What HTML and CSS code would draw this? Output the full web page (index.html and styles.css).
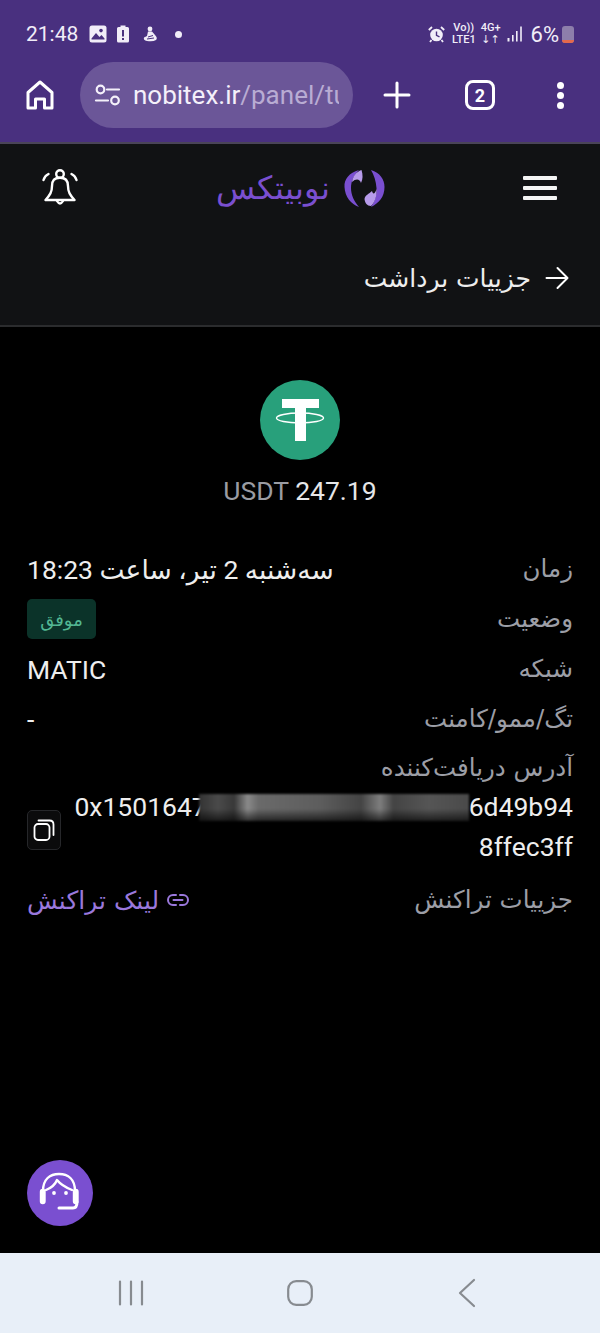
FILE: index.html
```html
<!DOCTYPE html>
<html lang="fa">

<head>
    <meta charset="UTF-8">
    <meta name="viewport" content="width=device-width, initial-scale=1.0">
    <title>Nobitex</title>
    <link rel="stylesheet" href="styles.css">
</head>

<body>
    <div class="phone">
        <!-- Android status bar + browser toolbar -->
        <div class="browser-top">
            <div class="status-bar">
                <div class="status-left">
                    <span class="clock">21:48</span>
                    <svg class="icon-pic" width="18" height="18" viewBox="0 0 18 18">
                        <rect x="0.5" y="0.5" width="17" height="17" rx="2.5" fill="#f1edf8" />
                        <circle cx="12" cy="5.6" r="1.8" fill="#49307f" />
                        <path d="M2.5 13.5 L7 8 L10.5 12 L12.5 10 L15.5 13.5 V14.5 H2.5 Z" fill="#49307f" />
                    </svg>
                    <svg class="icon-batt" width="14" height="18" viewBox="0 0 14 18">
                        <path d="M4.5 0.5 H9.5 V2 H11.5 Q13 2 13 3.5 V16 Q13 17.5 11.5 17.5 H2.5 Q1 17.5 1 16 V3.5 Q1 2 2.5 2 H4.5 Z" fill="#f1edf8" />
                        <rect x="6" y="5" width="2" height="6.5" fill="#49307f" />
                        <rect x="6" y="13" width="2" height="2" fill="#49307f" />
                    </svg>
                    <svg class="icon-app" width="15" height="16" viewBox="0 0 15 16">
                        <circle cx="7" cy="3" r="2.4" fill="#f1edf8" />
                        <path d="M5 5.5 L9 5.5 L12 9 Q15 12 13 14 Q10 16 4 15 Q0 14 1 11.5 L4 10 Z" fill="#f1edf8" />
                        <path d="M5 11 L10 9.5 M4 13 L11 12" stroke="#49307f" stroke-width="1" />
                    </svg>
                    <span class="st-dot"></span>
                </div>
                <div class="status-right">
                    <svg class="icon-alarm" width="17" height="17" viewBox="0 0 17 17">
                        <circle cx="8.5" cy="9" r="6.3" fill="#f1edf8" />
                        <path d="M8.5 5.5 V9.3 L11.5 10.8" stroke="#49307f" stroke-width="1.4" fill="none" />
                        <path d="M0.8 4 L4 1 M16.2 4 L13 1 M3.5 14 L2 16 M13.5 14 L15 16" stroke="#f1edf8" stroke-width="1.8" />
                    </svg>
                    <span class="net-text net-volte">Vo))<br>LTE1</span>
                    <span class="net-text net-4g">4G+<br>↓↑</span>
                    <svg class="icon-signal" width="16" height="16" viewBox="0 0 16 16">
                        <rect x="0.5" y="12" width="2" height="3.5" fill="#f1edf8" />
                        <rect x="5" y="9" width="1.6" height="6.5" fill="#f1edf8" />
                        <rect x="9" y="5" width="1.6" height="10.5" fill="#f1edf8" />
                        <rect x="13.2" y="0.5" width="1.6" height="15" fill="#f1edf8" />
                    </svg>
                    <span class="batt-text">6%</span>
                    <span class="batt-icon"><span class="batt-level"></span></span>
                </div>
            </div>
            <div class="toolbar">
                <button class="tool-btn tool-home">
                    <svg width="28" height="30" viewBox="0 0 28 30" fill="none" stroke="#fff" stroke-width="3" stroke-linejoin="round">
                        <path d="M2 12.5 L14 2 L26 12.5 V28 H18.5 V19 H9.5 V28 H2 Z" />
                    </svg>
                </button>
                <div class="url-pill">
                    <svg width="28" height="24" viewBox="0 0 28 24" fill="none" stroke="#f4f0fa" stroke-width="2.2" stroke-linecap="round">
                        <circle cx="6.5" cy="6.5" r="3.8" />
                        <path d="M13 6.5 H25" />
                        <path d="M2 17.5 H14" />
                        <circle cx="21" cy="17.5" r="3.8" />
                    </svg>
                    <div class="url-text"><span class="url-host">nobitex.ir</span><span class="url-path">/panel/tu</span></div>
                </div>
                <button class="tool-btn tool-plus">
                    <svg width="28" height="28" viewBox="0 0 28 28" stroke="#fff" stroke-width="3" stroke-linecap="round">
                        <path d="M14 2 V26 M2 14 H26" />
                    </svg>
                </button>
                <div class="tabs-count">2</div>
                <button class="tool-btn tool-more">
                    <span class="more-dot"></span>
                    <span class="more-dot"></span>
                    <span class="more-dot"></span>
                </button>
            </div>
        </div>

        <!-- site header -->
        <header class="site-header">
            <div class="nav-row">
                <svg class="icon-bell" width="36" height="38" viewBox="0 0 36 38" fill="none" stroke="#fff" stroke-width="2.4" stroke-linecap="round" stroke-linejoin="round">
                    <path d="M1.5 11 Q2.5 7 6.5 5" />
                    <path d="M29.5 5 Q33.5 7 34.5 11" />
                    <circle cx="18" cy="5" r="3.8" />
                    <path d="M18 8.8 C12 8.8 10 12 10 17 C10 23 8 26 3.5 31 H32.5 C28 26 26 23 26 17 C26 12 24 8.8 18 8.8 Z" />
                    <path d="M15 32 Q18 37 21 32" />
                </svg>
                <div class="logo">
                    <span class="logo-text">نوبیتکس</span>
                    <svg width="42" height="40" viewBox="0 0 42 40">
                        <path d="M15 2 C5 5 0 11 0.5 19 C1 29 7 36 15 39 C10 33 7 27 7 20 C7 13 10 7 15 2 Z" fill="#7a4fd0" />
                        <path d="M27 2 C36 5 40.5 11 40.5 19 C40.5 29 35 35 27 39 C31 33 33 27 32.5 20 C32 13 30 7 27 2 Z" fill="#7a4fd0" />
                        <path d="M8 14 C9 8 12 4 17.5 2 C19 7 19 11 17 15 C16 11 12 10 8 14 Z" fill="#b79bea" />
                        <path d="M28 23 C25 26 21 27 20.5 31 C21 35 23 38 27 38 C31 34 33 28 32.5 21 C31 26 29 27 28 23 Z" fill="#b79bea" />
                    </svg>
                </div>
                <div class="burger">
                    <span></span>
                    <span></span>
                    <span></span>
                </div>
            </div>
            <div class="title-row">
                <svg width="24" height="24" viewBox="0 0 24 24" fill="none" stroke="#fff" stroke-width="2" stroke-linecap="round" stroke-linejoin="round">
                    <path d="M1.5 12 H22 M12.5 2 L22.5 12 L12.5 22" />
                </svg>
                <h1 class="page-title">جزییات برداشت</h1>
            </div>
        </header>

        <!-- withdraw details -->
        <main class="content">
            <div class="coin">
                <svg width="80" height="80" viewBox="0 0 80 80">
                    <circle cx="40" cy="40" r="40" fill="#28a07b" />
                    <path d="M22 19 H59 V28 H46 V61 H35 V28 H22 Z" fill="#fff" />
                    <ellipse cx="40" cy="38" rx="23.5" ry="5" fill="none" stroke="#fff" stroke-width="1.4" />
                </svg>
                <div class="coin-amount"><span class="coin-unit">USDT</span> 247.19</div>
            </div>

            <div class="details" dir="rtl">
                <div class="row">
                    <span class="label">زمان</span>
                    <span class="value">سه‌شنبه 2 تیر، ساعت 18:23</span>
                </div>
                <div class="row">
                    <span class="label">وضعیت</span>
                    <span class="badge">موفق</span>
                </div>
                <div class="row">
                    <span class="label">شبکه</span>
                    <span class="value">MATIC</span>
                </div>
                <div class="row">
                    <span class="label">تگ/ممو/کامنت</span>
                    <span class="value">-</span>
                </div>
                <div class="address-block">
                    <span class="label">آدرس دریافت‌کننده</span>
                    <div class="address-row">
                        <div class="address" dir="ltr">
                            <div class="address-line"><span>0x1501647</span><span class="redacted"></span><span>6d49b94</span></div>
                            <div class="address-line">8ffec3ff</div>
                        </div>
                        <button class="copy-btn">
                            <svg width="22" height="24" viewBox="0 0 22 24" fill="none" stroke="#fff" stroke-width="1.8" stroke-linejoin="round">
                                <rect x="1.5" y="6" width="15" height="16" rx="3.5" />
                                <path d="M5.5 2.5 H16.5 Q20.5 2.5 20.5 6.5 V17" stroke-linecap="round" />
                            </svg>
                        </button>
                    </div>
                </div>
                <div class="row row-link">
                    <span class="label">جزییات تراکنش</span>
                    <a class="tx-link">
                        <svg width="24" height="14" viewBox="0 0 24 14" fill="none" stroke="#9a78dc" stroke-width="2" stroke-linecap="round">
                            <path d="M10 2 H7 A5 5 0 0 0 7 12 H10 M14 2 H17 A5 5 0 0 1 17 12 H14 M7.5 7 H16.5" />
                        </svg>
                        <span>لینک تراکنش</span>
                    </a>
                </div>
            </div>

            <button class="support-btn">
                <svg width="44" height="44" viewBox="0 0 44 44" fill="none" stroke="#fff" stroke-width="2.4" stroke-linecap="round" stroke-linejoin="round">
                    <path d="M5 20 C5 8 12 3 21 3 C30 3 37 8 37 20" />
                    <rect x="3" y="19" width="3.5" height="13" rx="1.7" fill="#fff" />
                    <rect x="36" y="19" width="3.5" height="13" rx="1.7" fill="#fff" />
                    <path d="M8 19 C13 17 17 14 19 9 C23 14 29 17 34 19" />
                    <path d="M39 31 C39 35 38 37 35 37 H21" stroke-width="3" />
                    <circle cx="16" cy="22" r="1.9" fill="#fff" stroke="none" />
                    <circle cx="28" cy="22" r="1.9" fill="#fff" stroke="none" />
                </svg>
            </button>
        </main>

        <!-- Android nav bar -->
        <nav class="android-nav">
            <svg width="26" height="26" viewBox="0 0 26 26" stroke="#878b90" stroke-width="2.2" stroke-linecap="round">
                <path d="M2 1.5 V24.5 M13 1.5 V24.5 M24 1.5 V24.5" />
            </svg>
            <svg class="nav-home" width="26" height="26" viewBox="0 0 26 26" fill="none" stroke="#878b90" stroke-width="2.2">
                <rect x="1.2" y="1.2" width="23.6" height="23.6" rx="8" />
            </svg>
            <svg width="18" height="30" viewBox="0 0 18 30" fill="none" stroke="#878b90" stroke-width="2.2" stroke-linecap="round" stroke-linejoin="round">
                <path d="M16 2 L2 15 L16 28" />
            </svg>
        </nav>
    </div>
</body>

</html>
```

FILE: styles.css
```css
* {
    box-sizing: border-box;
}

body {
    margin: 0;
    background-color: #000;
    font-family: Roboto, "Noto Sans", "DejaVu Sans", sans-serif;
}

button {
    padding: 0;
    border: none;
    background: none;
}

.phone {
    width: 600px;
    height: 1333px;
    display: flex;
    flex-direction: column;
    overflow: hidden;
}

/* browser chrome */
.browser-top {
    height: 144px;
    background-color: #49307f;
    border-bottom: 2px solid #4a4458;
    padding: 0 26px 0 24px;
}

.status-bar {
    height: 62px;
    padding-top: 20px;
    display: flex;
    justify-content: space-between;
    align-items: flex-start;
}

.status-left {
    height: 28px;
    display: flex;
    align-items: center;
    padding-left: 2px;
}

.clock {
    color: #f1edf8;
    font-size: 21px;
    width: 53px;
}

.icon-pic {
    margin-left: 10px;
}

.icon-batt {
    margin-left: 9px;
}

.icon-app {
    margin-left: 13px;
}

.st-dot {
    width: 7px;
    height: 7px;
    margin-left: 17px;
    border-radius: 50%;
    background-color: #f1edf8;
}

.status-right {
    height: 28px;
    display: flex;
    align-items: center;
    color: #f1edf8;
}

.net-text {
    font-size: 11px;
    font-weight: 500;
    line-height: 12px;
    text-align: center;
}

.net-volte {
    margin-left: 7px;
}

.net-4g {
    margin-left: 5px;
}

.icon-signal {
    margin-left: 6px;
}

.batt-text {
    font-size: 22px;
    margin-left: 8px;
}

.batt-icon {
    width: 12px;
    height: 17px;
    margin-left: 3px;
    border-radius: 3px;
    background-color: #8d7eab;
    display: flex;
    align-items: flex-end;
    overflow: hidden;
}

.batt-level {
    width: 100%;
    height: 3px;
    background-color: #e5694c;
}

.toolbar {
    height: 66px;
    display: flex;
    align-items: center;
}

.tool-btn {
    display: flex;
    align-items: center;
    justify-content: center;
}

.tool-home {
    margin-left: 2px;
}

.url-pill {
    width: 273px;
    height: 66px;
    margin-left: 26px;
    padding-left: 14px;
    border-radius: 33px;
    background-color: #6b5698;
    display: flex;
    align-items: center;
    gap: 11px;
    overflow: hidden;
}

.url-text {
    width: 206px;
    overflow: hidden;
    white-space: nowrap;
    font-size: 26px;
}

.url-host {
    color: #f4f0fa;
}

.url-path {
    color: #b9acd3;
}

.tool-plus {
    margin-left: 30px;
}

.tabs-count {
    width: 30px;
    height: 30px;
    margin-left: 54px;
    border: 3px solid #fff;
    border-radius: 8px;
    color: #fff;
    font-size: 18px;
    font-weight: 700;
    display: flex;
    align-items: center;
    justify-content: center;
}

.tool-more {
    flex-direction: column;
    gap: 3px;
    margin-left: 62px;
}

.more-dot {
    width: 7px;
    height: 7px;
    border-radius: 50%;
    background-color: #fff;
}

/* site header */
.site-header {
    height: 183px;
    background-color: #111214;
    border-bottom: 2px solid #2b2c2e;
}

.nav-row {
    height: 88px;
    padding: 0 43px 0 42px;
    display: flex;
    align-items: center;
    justify-content: space-between;
}

.logo {
    display: flex;
    align-items: center;
    gap: 14px;
}

.logo-text {
    color: #7a4fd0;
    font-size: 32px;
    line-height: 40px;
    font-family: "DejaVu Sans", sans-serif;
    font-weight: 300;
}

.burger {
    width: 34px;
    display: flex;
    flex-direction: column;
    gap: 6px;
}

.burger span {
    height: 4px;
    border-radius: 1px;
    background-color: #f4f4f4;
}

.title-row {
    height: 92px;
    padding: 0 31px 0 0;
    display: flex;
    flex-direction: row-reverse;
    align-items: center;
    gap: 14px;
}

.page-title {
    margin: 0;
    color: #eeeeee;
    font-size: 25px;
    font-weight: 400;
    font-family: "DejaVu Sans", sans-serif;
}

/* page content */
.content {
    flex: 1;
    position: relative;
    background-color: #000;
    padding: 53px 27px 0;
}

.coin {
    display: flex;
    flex-direction: column;
    align-items: center;
    gap: 14px;
}

.coin-amount {
    color: #e6e6e8;
    font-size: 26.5px;
    line-height: 32px;
    margin-top: 1px;
}

.coin-unit {
    color: #9a9ca3;
}

.details {
    margin-top: 37px;
    display: flex;
    flex-direction: column;
}

.row {
    min-height: 50px;
    display: flex;
    align-items: center;
    justify-content: space-between;
}

.label {
    color: #9c9ea6;
    font-size: 24.5px;
    line-height: 30px;
    font-family: "DejaVu Sans", sans-serif;
}

.value {
    color: #eeeeee;
    font-size: 26.5px;
    font-family: Roboto, "DejaVu Sans", sans-serif;
}

.badge {
    width: 69px;
    height: 40px;
    border-radius: 5px;
    background-color: #0b3329;
    color: #52b692;
    font-size: 18px;
    font-family: "DejaVu Sans", sans-serif;
    display: flex;
    align-items: center;
    justify-content: center;
}

.address-block {
    margin-top: 9px;
    display: flex;
    flex-direction: column;
}

.address-row {
    display: flex;
    align-items: center;
    justify-content: space-between;
    margin-top: 4px;
}

.address {
    color: #eeeeee;
    font-size: 26.5px;
    line-height: 40px;
    display: flex;
    flex-direction: column;
    align-items: flex-end;
}

.address-line {
    display: flex;
    align-items: center;
    justify-content: flex-end;
}

/* hidden part of the wallet address */
.redacted {
    width: 270px;
    height: 27px;
    margin-left: -8px;
    filter: blur(1px);
    background:
        linear-gradient(180deg, rgba(0, 0, 0, 0) 55%, rgba(0, 0, 0, 0.65) 100%),
        linear-gradient(90deg, #333 0%, #4a4a4a 7%, #383838 13%, #8a8a8a 18%, #6a6a6a 22%, #5d5d5d 45%, #444 60%, #7e7e7e 67%, #444 72%, #555 85%, #4a4a4a 100%);
}

.copy-btn {
    width: 34px;
    height: 40px;
    margin-top: 6px;
    border: 1px solid #26272a;
    border-radius: 5px;
    background-color: #0b0b0c;
    display: flex;
    align-items: center;
    justify-content: center;
}

.row-link {
    margin-top: 8px;
}

.tx-link {
    color: #9a78dc;
    font-size: 25px;
    font-family: "DejaVu Sans", sans-serif;
    display: flex;
    align-items: center;
    gap: 7px;
}

/* over the page corner, like a chat widget */
.support-btn {
    position: absolute;
    left: 27px;
    bottom: 27px;
    width: 66px;
    height: 66px;
    border-radius: 50%;
    background-color: #7a4fd0;
    display: flex;
    align-items: center;
    justify-content: center;
}

/* android buttons */
.android-nav {
    height: 80px;
    background-color: #e8eff8;
    display: flex;
    align-items: center;
    justify-content: space-between;
    padding: 0 124px 0 118px;
}

.nav-home {
    margin-right: 2px;
}
```
